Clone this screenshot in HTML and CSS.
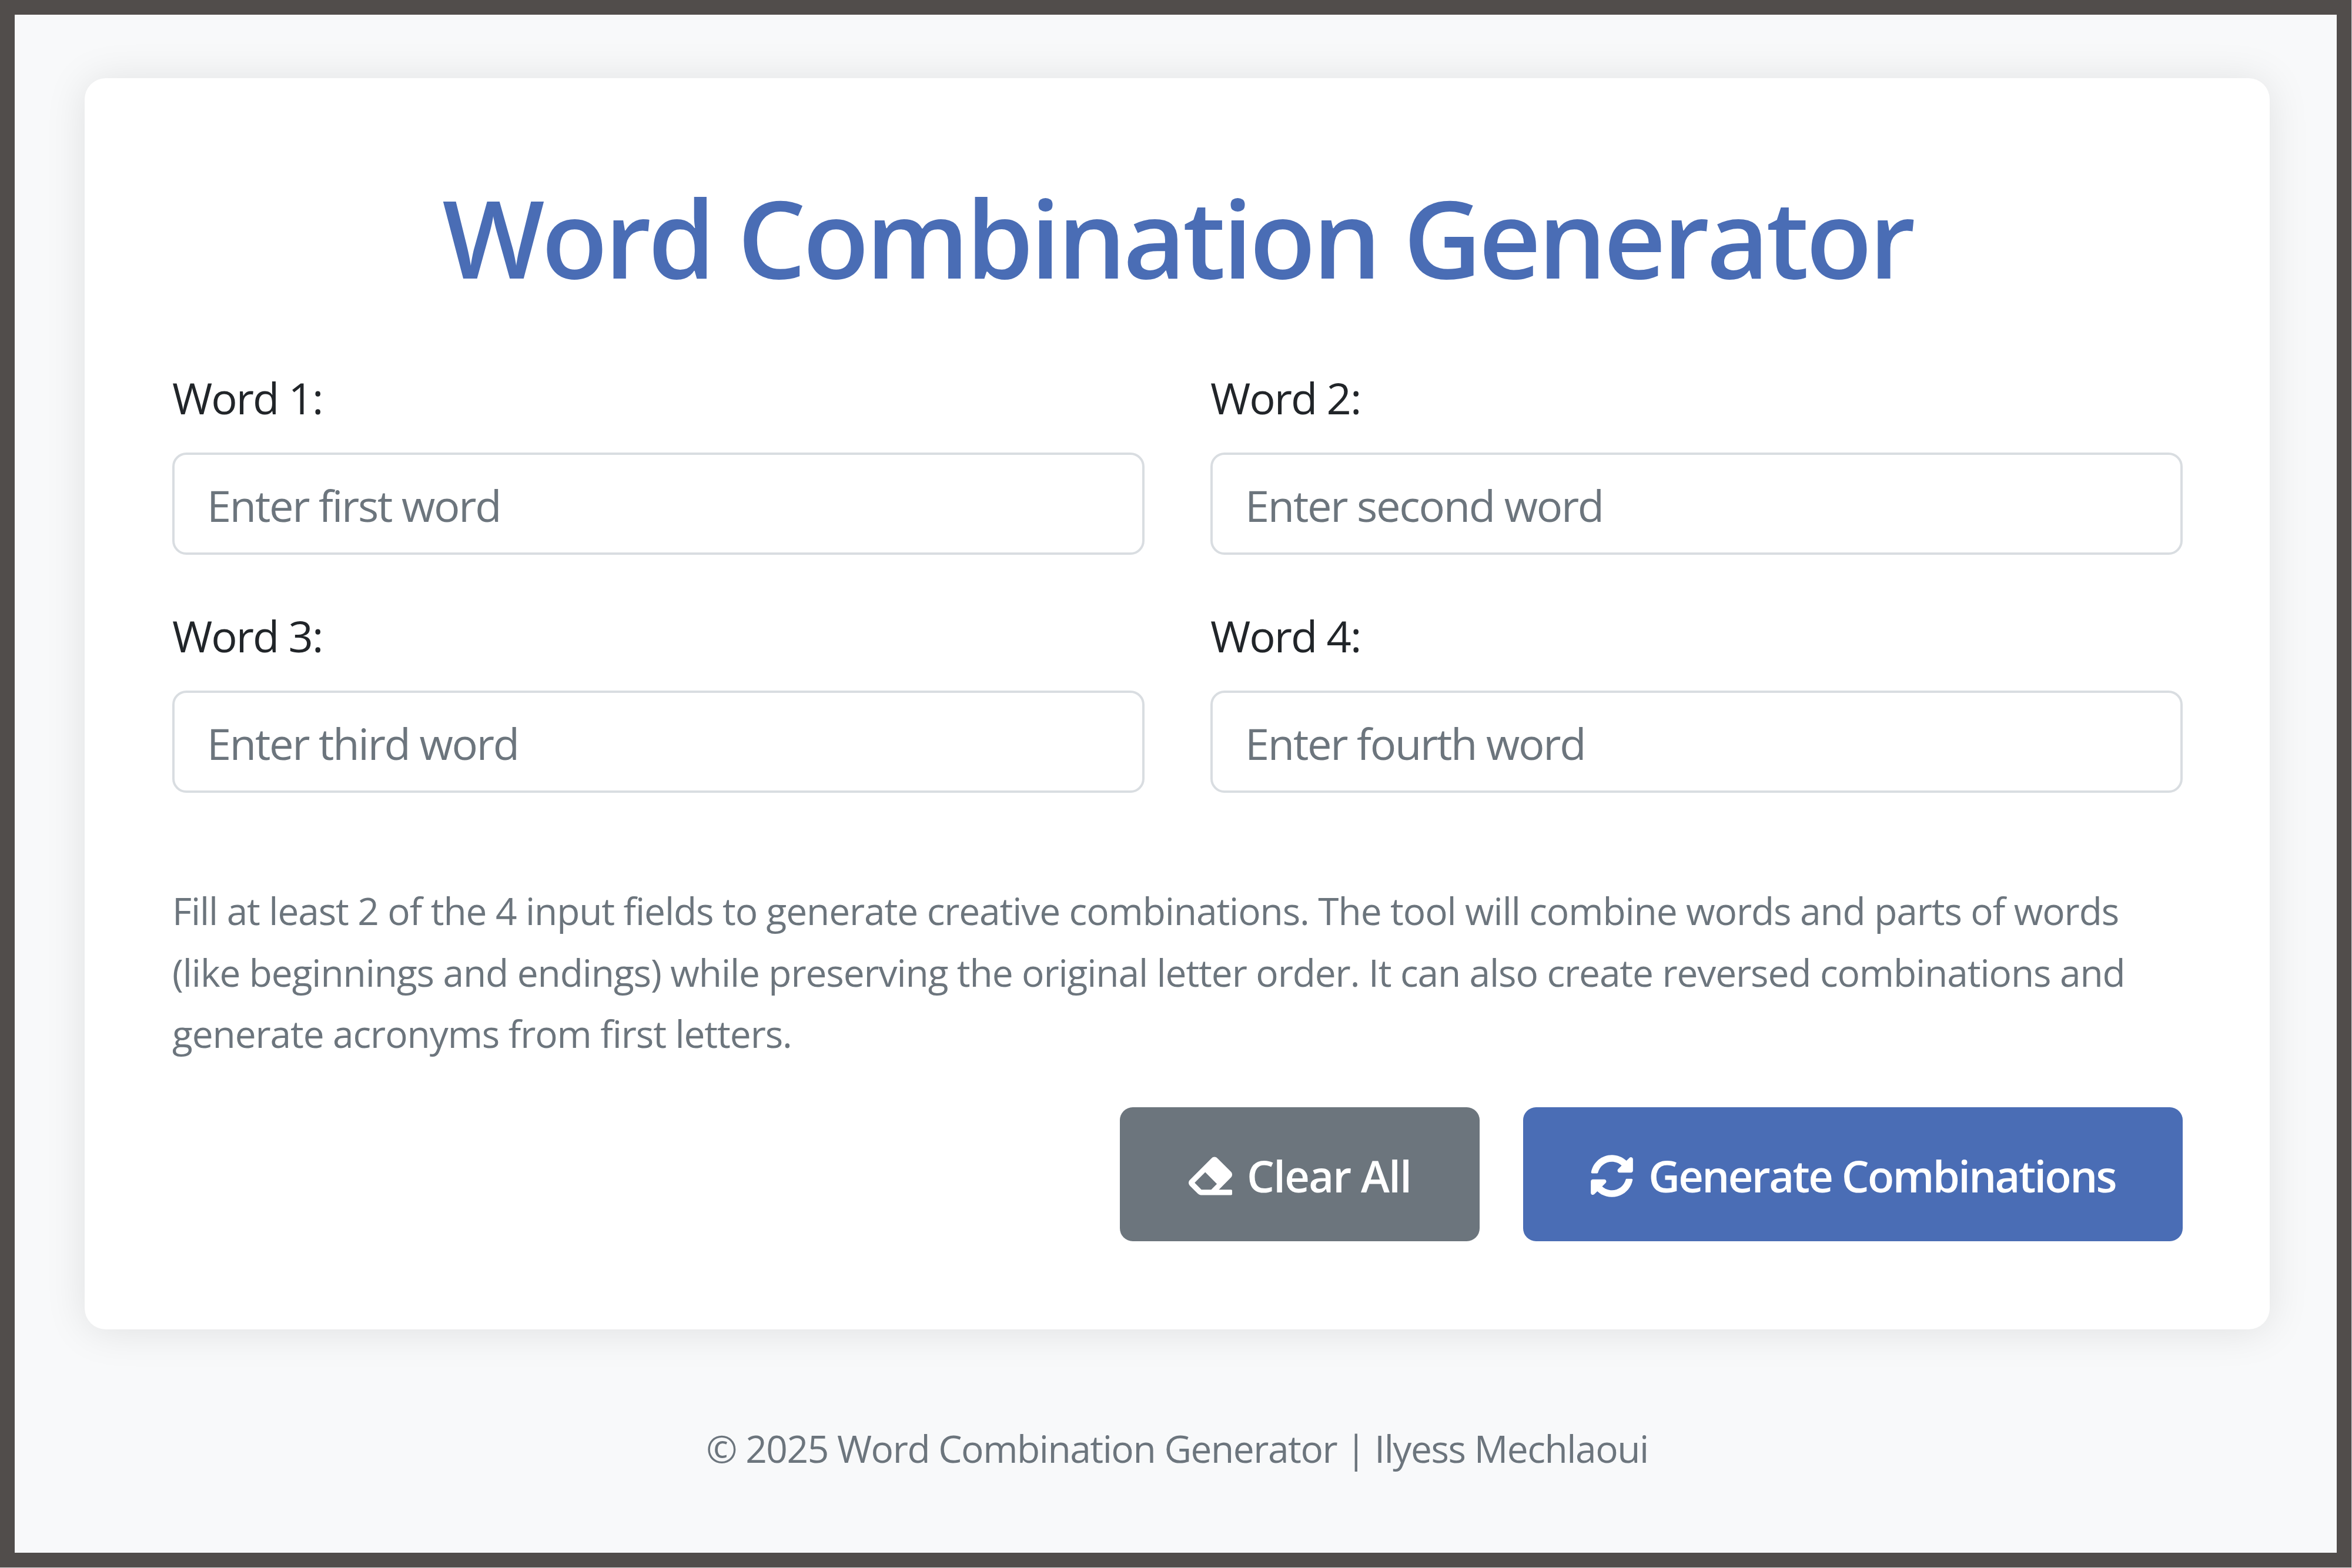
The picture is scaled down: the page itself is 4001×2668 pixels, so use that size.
FILE: index.html
```html
<!DOCTYPE html>
<html lang="en">
<head>
  <meta charset="UTF-8" />
  <meta name="viewport" content="width=device-width, initial-scale=1.0" />
  <title>Word Combination Generator</title>
  <link rel="stylesheet" href="styles.css">
</head>
<body>
  <div class="frame">
    <main class="card">
      <h1>Word Combination Generator</h1>

      <!-- Word inputs -->
      <form class="fields">
        <div class="field">
          <label for="word1">Word 1:</label>
          <input type="text" id="word1" placeholder="Enter first word" />
        </div>
        <div class="field">
          <label for="word2">Word 2:</label>
          <input type="text" id="word2" placeholder="Enter second word" />
        </div>
        <div class="field">
          <label for="word3">Word 3:</label>
          <input type="text" id="word3" placeholder="Enter third word" />
        </div>
        <div class="field">
          <label for="word4">Word 4:</label>
          <input type="text" id="word4" placeholder="Enter fourth word" />
        </div>
      </form>

      <p class="info">Fill at least 2 of the 4 input fields to generate creative combinations. The tool will combine words and parts of words (like beginnings and endings) while preserving the original letter order. It can also create reversed combinations and generate acronyms from first letters.</p>

      <div class="actions">
        <button type="button" class="btn btn-clear">
          <svg class="icon icon-eraser" viewBox="0 0 512 512" aria-hidden="true"><path d="M497.941 273.941c18.745-18.745 18.745-49.137 0-67.882l-160-160c-18.745-18.745-49.136-18.746-67.883 0l-256 256c-18.745 18.745-18.745 49.137 0 67.882l96 96A48.004 48.004 0 0 0 144 480h356c6.627 0 12-5.373 12-12v-40c0-6.627-5.373-12-12-12H355.883l142.058-142.059zm-302.627-62.627l137.373 137.373L265.373 416H150.628l-80-80 124.686-124.686z"/></svg>
          Clear All
        </button>
        <button type="button" class="btn btn-generate">
          <svg class="icon" viewBox="0 0 512 512" aria-hidden="true"><path d="M370.72 133.28C339.458 104.008 298.888 87.962 255.848 88c-77.458.068-144.328 53.178-162.791 126.85-1.344 5.363-6.122 9.15-11.651 9.15H24.103c-7.498 0-13.194-6.807-11.807-14.176C33.933 94.924 134.813 8 256 8c66.448 0 126.791 26.136 171.315 68.685L463.03 40.97C478.149 25.851 504 36.559 504 57.941V192c0 13.255-10.745 24-24 24H345.941c-21.382 0-32.09-25.851-16.971-40.971l41.75-41.749zM32 296h134.059c21.382 0 32.09 25.851 16.971 40.971l-41.75 41.75c31.262 29.273 71.835 45.319 114.876 45.28 77.418-.07 144.315-53.144 162.787-126.849 1.344-5.363 6.122-9.15 11.651-9.15h57.304c7.498 0 13.194 6.807 11.807 14.176C478.067 417.076 377.187 504 256 504c-66.448 0-126.791-26.136-171.315-68.685L48.97 471.03C33.851 486.149 8 475.441 8 454.059V320c0-13.255 10.745-24 24-24z"/></svg>
          Generate Combinations
        </button>
      </div>
    </main>

    <footer>&copy; 2025 Word Combination Generator | Ilyess Mechlaoui</footer>
  </div>
</body>
</html>
```

FILE: styles.css
```css
:root {
  --primary-color: #4a6db5;
  --gray-color: #6c757d;
  --text-color: #212529;
  --border-color: #d9dde1;
  --background-color: #f8f9fa;
  --frame-color: #514d4b;
}

* {
  box-sizing: border-box;
  margin: 0;
  padding: 0;
  font-family: "Open Sans", "Noto Sans", sans-serif;
}

body {
  background-color: #d8d8d8;
  color: var(--text-color);
}

.frame {
  width: 4000px;
  height: 2667px;
  border: 25px solid var(--frame-color);
  background-color: var(--background-color);
  padding: 108px 114px 0 119px;
}

.card {
  background-color: #fff;
  border-radius: 36px;
  padding: 140px 148px 150px 149px;
  box-shadow: 0 3px 70px rgba(0, 0, 0, 0.1);
}

h1 {
  font-size: 184px;
  font-weight: 600;
  line-height: 260px;
  letter-spacing: -5.2px;
  text-align: center;
  color: var(--primary-color);
  margin-bottom: 94px;
}

.fields {
  display: grid;
  grid-template-columns: 1fr 1fr;
  column-gap: 112px;
  row-gap: 88px;
}

.field label {
  display: block;
  font-size: 74px;
  line-height: 100px;
  letter-spacing: -2px;
  margin-bottom: 43px;
}

.field input {
  display: block;
  width: 100%;
  height: 174px;
  padding: 4px 55px 0;
  border: 4px solid var(--border-color);
  border-radius: 24px;
  background-color: #fff;
  font-size: 74px;
  letter-spacing: -2.3px;
  color: var(--text-color);
}

.field input::placeholder {
  color: var(--gray-color);
  opacity: 1;
}

.info {
  margin-top: 149px;
  font-size: 64px;
  line-height: 104.5px;
  letter-spacing: -1.1px;
  color: var(--gray-color);
}

.actions {
  display: flex;
  justify-content: flex-end;
  gap: 74px;
  margin-top: 72px;
}

.btn {
  display: flex;
  align-items: center;
  gap: 25px;
  height: 228px;
  padding-top: 6px;
  border: none;
  border-radius: 22px;
  color: #fff;
  font-size: 74px;
  font-weight: 600;
}

.btn-clear {
  padding-left: 117px;
  padding-right: 117px;
  letter-spacing: -1.7px;
  background-color: var(--gray-color);
}

.btn-generate {
  padding-left: 114px;
  padding-right: 114px;
  letter-spacing: -2.6px;
  background-color: var(--primary-color);
}

.icon {
  width: 74px;
  height: 74px;
  fill: #fff;
}

footer {
  margin-top: 153px;
  text-align: center;
  font-size: 64px;
  line-height: 100px;
  letter-spacing: -1.45px;
  color: var(--gray-color);
}
```
